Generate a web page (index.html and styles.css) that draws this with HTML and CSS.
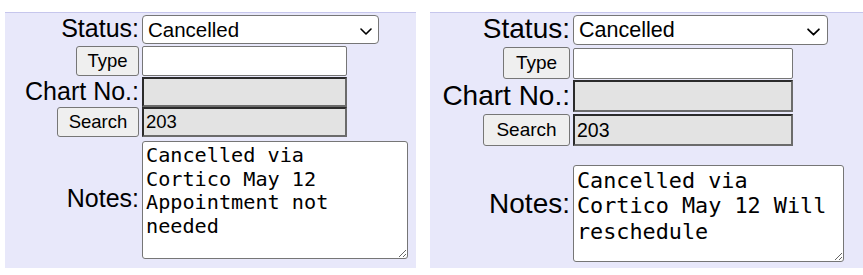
FILE: index.html
```html
<!DOCTYPE html>
<html>
<head>
<meta charset="utf-8">
<link rel="stylesheet" href="styles.css">
</head>
<body>
<div class="page">
  <form class="panel panel-a">
    <label class="lbl">Status:</label>
    <div class="cell">
      <div class="select-wrap">
        <select class="status"><option>Cancelled</option></select>
        <svg class="chev" viewBox="0 0 12 7" aria-hidden="true"><path d="M1 1 L6 6 L11 1" fill="none" stroke="#000" stroke-width="1.6" stroke-linecap="round" stroke-linejoin="round"/></svg>
      </div>
    </div>

    <div class="lbl"><button type="button" class="btn btn-type">Type</button></div>
    <div class="cell"><input class="txt txt-type" type="text" value=""></div>

    <label class="lbl">Chart No.:</label>
    <div class="cell"><input class="txt ro txt-chart" type="text" value="" readonly></div>

    <div class="lbl"><button type="button" class="btn btn-search">Search</button></div>
    <div class="cell"><input class="txt ro txt-search" type="text" value="203" readonly></div>

    <label class="lbl lbl-notes">Notes:</label>
    <div class="cell"><textarea class="notes">Cancelled via
Cortico May 12
Appointment not needed</textarea></div>
  </form>

  <form class="panel panel-b">
    <label class="lbl">Status:</label>
    <div class="cell">
      <div class="select-wrap">
        <select class="status"><option>Cancelled</option></select>
        <svg class="chev" viewBox="0 0 12 7" aria-hidden="true"><path d="M1 1 L6 6 L11 1" fill="none" stroke="#000" stroke-width="1.6" stroke-linecap="round" stroke-linejoin="round"/></svg>
      </div>
    </div>

    <div class="lbl"><button type="button" class="btn btn-type">Type</button></div>
    <div class="cell"><input class="txt txt-type" type="text" value=""></div>

    <label class="lbl">Chart No.:</label>
    <div class="cell"><input class="txt ro txt-chart" type="text" value="" readonly></div>

    <div class="lbl"><button type="button" class="btn btn-search">Search</button></div>
    <div class="cell"><input class="txt ro txt-search" type="text" value="203" readonly></div>

    <label class="lbl lbl-notes">Notes:</label>
    <div class="cell"><textarea class="notes">Cancelled via
Cortico May 12 Will reschedule</textarea></div>
  </form>
</div>
</body>
</html>
```
FILE: styles.css
```css
html, body {
  margin: 0;
  padding: 0;
  background: #ffffff;
}

body {
  font-family: "Liberation Sans", Arial, sans-serif;
  color: #000;
}

.page {
  display: flex;
  gap: 14px;
  padding: 12px 0 0 5px;
}

.panel {
  background: #e8e8fa;
  border-top: 1px solid #c6c6ec;
  height: 255px;
  display: grid;
  align-content: start;
  align-items: center;
  margin: 0;
  padding: 0;
}

.panel-a {
  width: 411px;
  grid-template-columns: 137px auto;
}

.panel-b {
  flex: 1;
  grid-template-columns: 143px auto;
}

.lbl {
  display: flex;
  justify-content: flex-end;
  align-items: center;
  padding-right: 3px;
  white-space: nowrap;
  line-height: 1;
}

.panel-a .lbl { font-size: 25px; }
.panel-b .lbl { font-size: 28px; }

.cell {
  display: flex;
  align-items: center;
}

.select-wrap {
  position: relative;
  display: flex;
}

.status {
  -webkit-appearance: none;
  appearance: none;
  box-sizing: border-box;
  font-family: "Liberation Sans", Arial, sans-serif;
  background: #fff;
  color: #000;
  border: 1px solid #767676;
  border-radius: 4px;
  padding: 0 20px 0 5px;
  margin: 0;
  outline: none;
}

.chev {
  position: absolute;
  width: 12px;
  height: 7px;
  top: 50%;
  margin-top: -2px;
  right: 7px;
  pointer-events: none;
}

.panel-a .select-wrap { margin-top: 2px; }
.panel-a .status {
  width: 237px;
  height: 29px;
  font-size: 20.5px;
}

.panel-b .select-wrap { margin-top: 2px; }
.panel-b .status {
  width: 255px;
  height: 30px;
  font-size: 21.5px;
}
.panel-b .chev { width: 13px; height: 8px; right: 8px; }

.btn {
  box-sizing: border-box;
  font-family: "Liberation Sans", Arial, sans-serif;
  background: #efefef;
  color: #000;
  border: 1px solid #767676;
  border-radius: 3px;
  padding: 0;
  margin: 0;
  text-align: center;
}

.panel-a .btn { font-size: 18.5px; height: 30px; }
.panel-b .btn { font-size: 19px; height: 32px; }

.panel-a .btn-type { width: 63px; margin-top: 2px; }
.panel-a .btn-search { width: 82px; }
.panel-b .btn-type { width: 67px; margin-top: 2px; }
.panel-b .btn-search { width: 87px; margin-top: 2px; }

.txt {
  box-sizing: border-box;
  font-family: "Liberation Sans", Arial, sans-serif;
  color: #000;
  background: #fff;
  border: 1px solid #767676;
  border-radius: 2px;
  padding: 0 3px;
  margin: 0;
  outline: none;
}

.txt.ro {
  background: #e3e3e3;
  border: 2px solid;
  border-color: #2b2b2b #6b6b6b #6b6b6b #2b2b2b;
  border-radius: 0;
  padding: 0 2px;
}

.panel-a .txt { width: 205px; height: 30px; font-size: 18.5px; }
.panel-b .txt { width: 220px; height: 31px; font-size: 19.5px; }

.panel-a .txt-type { margin-top: 2px; }
.panel-a .txt-chart { margin-top: 1px; }
.panel-a .txt-search { margin-top: 0; }

.panel-b .txt-type { margin-top: 2px; }
.panel-b .txt-chart { margin-top: 1px; height: 32px; }
.panel-b .txt-search { margin-top: 2px; height: 32px; }

.notes {
  box-sizing: border-box;
  font-family: "DejaVu Sans Mono", Menlo, monospace;
  color: #000;
  background: #fff;
  border: 1px solid #767676;
  border-radius: 3px;
  padding: 2px 3px;
  margin: 0;
  resize: both;
  overflow: hidden;
  line-height: 1.165;
  outline: none;
}

.panel-a .notes {
  width: 266px;
  height: 118px;
  font-size: 20.2px;
  margin-top: 4px;
}

.panel-b .notes {
  width: 271px;
  height: 97px;
  font-size: 21.8px;
  margin-top: 19px;
}
```
